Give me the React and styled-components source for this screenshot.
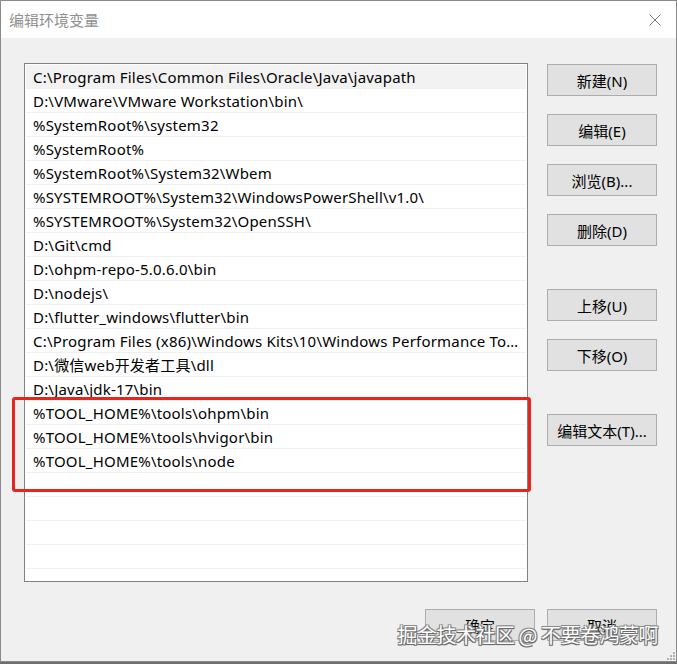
import React from "react"
import styled, { createGlobalStyle } from "styled-components"

const GlobalStyle = createGlobalStyle`
  html, body {
    margin: 0;
    padding: 0;
    background: #6e6e6e;
  }
  * {
    box-sizing: border-box;
  }
`

const paths = [
  "C:\\Program Files\\Common Files\\Oracle\\Java\\javapath",
  "D:\\VMware\\VMware Workstation\\bin\\",
  "%SystemRoot%\\system32",
  "%SystemRoot%",
  "%SystemRoot%\\System32\\Wbem",
  "%SYSTEMROOT%\\System32\\WindowsPowerShell\\v1.0\\",
  "%SYSTEMROOT%\\System32\\OpenSSH\\",
  "D:\\Git\\cmd",
  "D:\\ohpm-repo-5.0.6.0\\bin",
  "D:\\nodejs\\",
  "D:\\flutter_windows\\flutter\\bin",
  "C:\\Program Files (x86)\\Windows Kits\\10\\Windows Performance Toolkit\\",
  "D:\\微信web开发者工具\\dll",
  "D:\\Java\\jdk-17\\bin",
  "%TOOL_HOME%\\tools\\ohpm\\bin",
  "%TOOL_HOME%\\tools\\hvigor\\bin",
  "%TOOL_HOME%\\tools\\node",
]

const sideButtons = [
  { label: "新建(N)" },
  { label: "编辑(E)" },
  { label: "浏览(B)..." },
  { label: "删除(D)" },
  { label: "上移(U)", gap: 43 },
  { label: "下移(O)" },
  { label: "编辑文本(T)...", gap: 43 },
]

const Window = styled.div`
  position: relative;
  width: 677px;
  height: 662px;
  border: 1px solid #8a8a8a;
  display: flex;
  flex-direction: column;
  font-family: "Noto Sans", "Noto Sans CJK SC", sans-serif;
`

const TitleBar = styled.div`
  height: 37px;
  background: #ffffff;
  display: flex;
  align-items: center;
  justify-content: space-between;
  padding: 0 15px 0 8px;
`

const Title = styled.span`
  font-family: "Noto Sans CJK SC", sans-serif;
  font-size: 15px;
  color: #8f8f8f;
`

const Close = styled.svg`
  display: block;
  width: 12px;
  height: 12px;
`

const Body = styled.div`
  position: relative;
  flex: 1;
  background: #f0f0f0;
  padding: 25px 19px 0 23px;
`

const Main = styled.div`
  display: flex;
  gap: 19px;
`

const List = styled.div`
  width: 504px;
  height: 519px;
  background: #ffffff;
  border: 1px solid #828282;
  padding: 1px 1px 0 1px;
  overflow: hidden;
`

const Row = styled.div`
  height: 24px;
  border-bottom: 1px solid #f0f0f0;
  padding: 1px 4px 0 7px;
  font-size: 15px;
  letter-spacing: 0.2px;
  line-height: 22px;
  color: #000;
  white-space: nowrap;
  overflow: hidden;
  text-overflow: ellipsis;
  background: ${(p) => (p.$selected ? "#f2f2f2" : "transparent")};
`

const Side = styled.div`
  display: flex;
  flex-direction: column;
  gap: 18px;
  padding-top: 1px;
`

const Button = styled.button`
  width: 110px;
  height: 32px;
  margin-top: ${(p) => (p.$gap ? p.$gap - 18 : 0)}px;
  background: #e1e1e1;
  border: 1px solid #adadad;
  border-radius: 0;
  padding: 0;
  font-family: "Noto Sans", "Noto Sans CJK SC", sans-serif;
  font-size: 15px;
  color: #000;
`

const Footer = styled.div`
  display: flex;
  justify-content: flex-end;
  gap: 12px;
  margin-top: 27px;
`

const Highlight = styled.div`
  position: absolute;
  left: 11px;
  top: 359px;
  width: 519px;
  height: 95px;
  border: 3px solid #e8241e;
  border-radius: 3px;
  pointer-events: none;
`

const Watermark = styled.div`
  position: absolute;
  right: 18px;
  bottom: 14px;
  font-family: "Noto Sans CJK SC", sans-serif;
  font-size: 20px;
  line-height: 24px;
  letter-spacing: -0.5px;
  color: #ffffff;
  white-space: nowrap;
  text-shadow: 1px 1px 0 #6a6a6a, -1px -1px 0 #8a8a8a, 1px -1px 0 #8a8a8a,
    -1px 1px 0 #6a6a6a, 0 1px 1px #555;
`

const Grip = styled.svg`
  position: absolute;
  right: 1px;
  bottom: 1px;
  width: 10px;
  height: 10px;
`

const App = () => {
  const rows = [...paths, ...Array(6).fill("")]
  return (
    <>
      <GlobalStyle />
      <Window>
        <TitleBar>
          <Title>编辑环境变量</Title>
          <Close viewBox="0 0 12 12">
            <path d="M0.5 0.5 L11.5 11.5 M11.5 0.5 L0.5 11.5" stroke="#7a7a7a" strokeWidth="1" fill="none" />
          </Close>
        </TitleBar>
        <Body>
          <Main>
            <List>
              {rows.map((text, i) => (
                <Row key={i} $selected={i === 0}>
                  {text}
                </Row>
              ))}
            </List>
            <Side>
              {sideButtons.map((b) => (
                <Button key={b.label} $gap={b.gap}>
                  {b.label}
                </Button>
              ))}
            </Side>
          </Main>
          <Footer>
            <Button>确定</Button>
            <Button>取消</Button>
          </Footer>
          <Highlight />
          <Watermark>掘金技术社区 @ 不要卷鸿蒙啊</Watermark>
          <Grip viewBox="0 0 10 10">
            {[
              [8, 2],
              [5, 5],
              [8, 5],
              [2, 8],
              [5, 8],
              [8, 8],
            ].map(([x, y]) => (
              <rect key={`${x}-${y}`} x={x} y={y} width="2" height="2" fill="#b4b4b4" />
            ))}
          </Grip>
        </Body>
      </Window>
    </>
  )
}

export default App
